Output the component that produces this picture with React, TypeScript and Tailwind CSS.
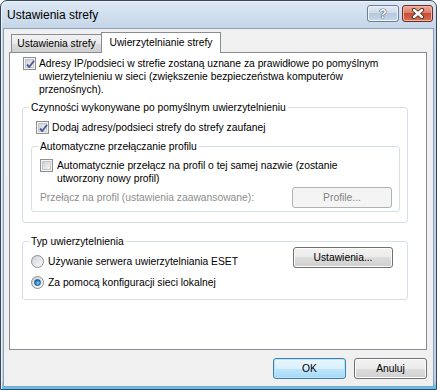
import React from "react";

/* ─── Small Win7-style controls ─────────────────────────────────────────── */

function CheckBox({ checked }: { checked?: boolean }) {
  return (
    <span className="relative flex h-[13px] w-[13px] shrink-0 items-center justify-center border border-[#8e8f8f] bg-[#f4f4f4]">
      <span className="h-[9px] w-[9px] border border-[#c3c6cb] bg-linear-to-br from-[#cdd1d7] to-[#f6f6f6]" />
      {checked && (
        <svg className="absolute left-[1px] top-[1px]" width="11" height="11" viewBox="0 0 11 11">
          <path d="M2 5.5 L4.3 8 L9 1.8" fill="none" stroke="#4a5f97" strokeWidth="1.9" strokeLinejoin="round" />
        </svg>
      )}
    </span>
  );
}

function Radio({ checked }: { checked?: boolean }) {
  return (
    <span className="flex h-[13px] w-[13px] shrink-0 items-center justify-center rounded-full border border-[#8e8f8f] bg-linear-to-br from-[#cdd1d7] to-[#fbfbfb]">
      {checked && (
        <span className="h-[7px] w-[7px] rounded-full border border-[#1c4f86] bg-[radial-gradient(circle_at_60%_65%,#7ad3f7,#2a7fc2_60%,#14477e)]" />
      )}
    </span>
  );
}

function Button({
  label,
  width,
  def,
  disabled,
}: {
  label: string;
  width: string;
  def?: boolean;
  disabled?: boolean;
}) {
  if (disabled) {
    return (
      <div className={`${width} flex h-[21px] items-center justify-center rounded-[3px] border border-[#adb2b5] bg-[#f4f4f4] text-[#838383]`}>
        {label}
      </div>
    );
  }
  return (
    <div
      className={`${width} flex h-[21px] items-center justify-center rounded-[3px] border ${
        def
          ? "border-[#3c7fb1] bg-[linear-gradient(#eaf6fd,#d9f0fc_50%,#bee6fd_50%,#a7d9f5)] shadow-[inset_0_0_0_1px_#b9e3f8]"
          : "border-[#707070] bg-[linear-gradient(#f2f2f2,#ebebeb_50%,#dddddd_50%,#cfcfcf)] shadow-[inset_0_0_0_1px_#fcfcfc]"
      }`}
    >
      {label}
    </div>
  );
}

/* ─── Dialog ────────────────────────────────────────────────────────────── */

export default function App() {
  return (
    <div className="h-[390px] w-[437px] font-['Liberation_Sans',Arial,sans-serif] text-black">
      <div className="flex h-full flex-col rounded-t-[7px] border border-[#34465a] bg-[linear-gradient(#dce7f3,#c6d6e8_28px,#bfd1e6_380px,#5cc3ee_386px,#5cc3ee)] shadow-[inset_1px_1px_0_#eef4fa]">
        {/* Title bar */}
        <div className="flex h-[27px] shrink-0 items-start justify-between pl-[6px] pr-[3px] pt-[4px]">
          <span className="text-[12px] leading-[20px]">Ustawienia strefy</span>
          <div className="flex gap-[3px]">
            <div className="flex h-[17px] w-[32px] items-center justify-center rounded-[3px] border border-[#6b7f99] bg-[linear-gradient(#e3ebf5,#cdd9e8_50%,#b6c8dd_50%,#c9d8ea)] shadow-[inset_0_0_0_1px_#eef3f9]">
              <span className="text-[12px] font-bold leading-none text-white [text-shadow:0_0_1px_#3b4e66,0_0_1px_#3b4e66,0_0_1px_#3b4e66]">?</span>
            </div>
            <div className="flex h-[17px] w-[31px] items-center justify-center rounded-[3px] border border-[#6e2b22] bg-[linear-gradient(#eba896,#d97a63_50%,#c74b32_50%,#d67259)] shadow-[inset_0_0_0_1px_#f0b8a9]">
              <svg width="14" height="11" viewBox="0 0 14 11">
                <path d="M3 2 L11 9 M11 2 L3 9" stroke="#4a2a24" strokeWidth="4.2" strokeLinecap="round" />
                <path d="M3 2 L11 9 M11 2 L3 9" stroke="#ffffff" strokeWidth="2.4" strokeLinecap="round" />
              </svg>
            </div>
          </div>
        </div>

        {/* Client area */}
        <div className="mx-[2px] mb-[2px] flex flex-1 flex-col border border-[#8ca0b8] bg-[#f0f0f0] text-[10.3px] leading-[13px]">
          {/* Tabs */}
          <div className="flex items-end pl-[7px] pt-[3px]">
            <div className="flex h-[18px] w-[91px] items-center justify-center border border-b-0 border-[#898c95] bg-[linear-gradient(#f2f2f2,#ebebeb_50%,#dddddd_50%,#cfcfcf)]">
              Ustawienia strefy
            </div>
            <div className="relative z-10 -mb-px -ml-px flex h-[21px] w-[120px] items-center justify-center border border-b-0 border-[#898c95] bg-white pb-[1px]">
              Uwierzytelnianie strefy
            </div>
          </div>

          {/* Tab panel */}
          <div className="ml-[5px] mr-[6px] h-[298px] border border-[#898c95] bg-white">
            <div className="ml-[13px] mt-[4px] flex gap-[3px]">
              <CheckBox checked />
              <span className="whitespace-nowrap">
                Adresy IP/podsieci w strefie zostaną uznane za prawidłowe po pomyślnym
                <br />
                uwierzytelnieniu w sieci (zwiększenie bezpieczeństwa komputerów
                <br />
                przenośnych).
              </span>
            </div>

            <fieldset className="ml-[12px] mt-[5px] w-[386px] rounded-[3px] border border-[#d5dfe5] pb-[10px]">
              <legend className="ml-[6px] px-[2px]">Czynności wykonywane po pomyślnym uwierzytelnieniu</legend>
              <div className="ml-[13px] mt-[7px] flex gap-[3px]">
                <CheckBox checked />
                <span>Dodaj adresy/podsieci strefy do strefy zaufanej</span>
              </div>

              <fieldset className="ml-[8px] mt-[6px] w-[369px] rounded-[3px] border border-[#d5dfe5] pb-[3px]">
                <legend className="ml-[6px] px-[2px]">Automatyczne przełączanie profilu</legend>
                <div className="ml-[8px] mt-[6px] flex gap-[4px]">
                  <CheckBox />
                  <span className="whitespace-nowrap">
                    Automatycznie przełącz na profil o tej samej nazwie (zostanie
                    <br />
                    utworzony nowy profil)
                  </span>
                </div>
                <div className="mt-[2px] flex items-center justify-between pl-[8px] pr-[7px]">
                  <span className="text-[#8d8d8d]">Przełącz na profil (ustawienia zaawansowane):</span>
                  <Button label="Profile..." width="w-[100px]" disabled />
                </div>
              </fieldset>
            </fieldset>

            <fieldset className="ml-[12px] mt-[12px] w-[386px] rounded-[3px] border border-[#d5dfe5] pb-[10px]">
              <legend className="ml-[6px] px-[2px]">Typ uwierzytelnienia</legend>
              <div className="flex items-start justify-between pl-[8px] pr-[14px]">
                <div className="flex flex-col gap-[8px] pt-[7px]">
                  <div className="flex items-center gap-[4px]">
                    <Radio />
                    <span>Używanie serwera uwierzytelniania ESET</span>
                  </div>
                  <div className="flex items-center gap-[4px]">
                    <Radio checked />
                    <span>Za pomocą konfiguracji sieci lokalnej</span>
                  </div>
                </div>
                <div className="-mt-[1px]">
                  <Button label="Ustawienia..." width="w-[100px]" />
                </div>
              </div>
            </fieldset>
          </div>

          {/* Dialog buttons */}
          <div className="mt-[8px] flex justify-end gap-[8px] pr-[6px]">
            <Button label="OK" width="w-[73px]" def />
            <Button label="Anuluj" width="w-[73px]" />
          </div>
        </div>
      </div>
    </div>
  );
}
